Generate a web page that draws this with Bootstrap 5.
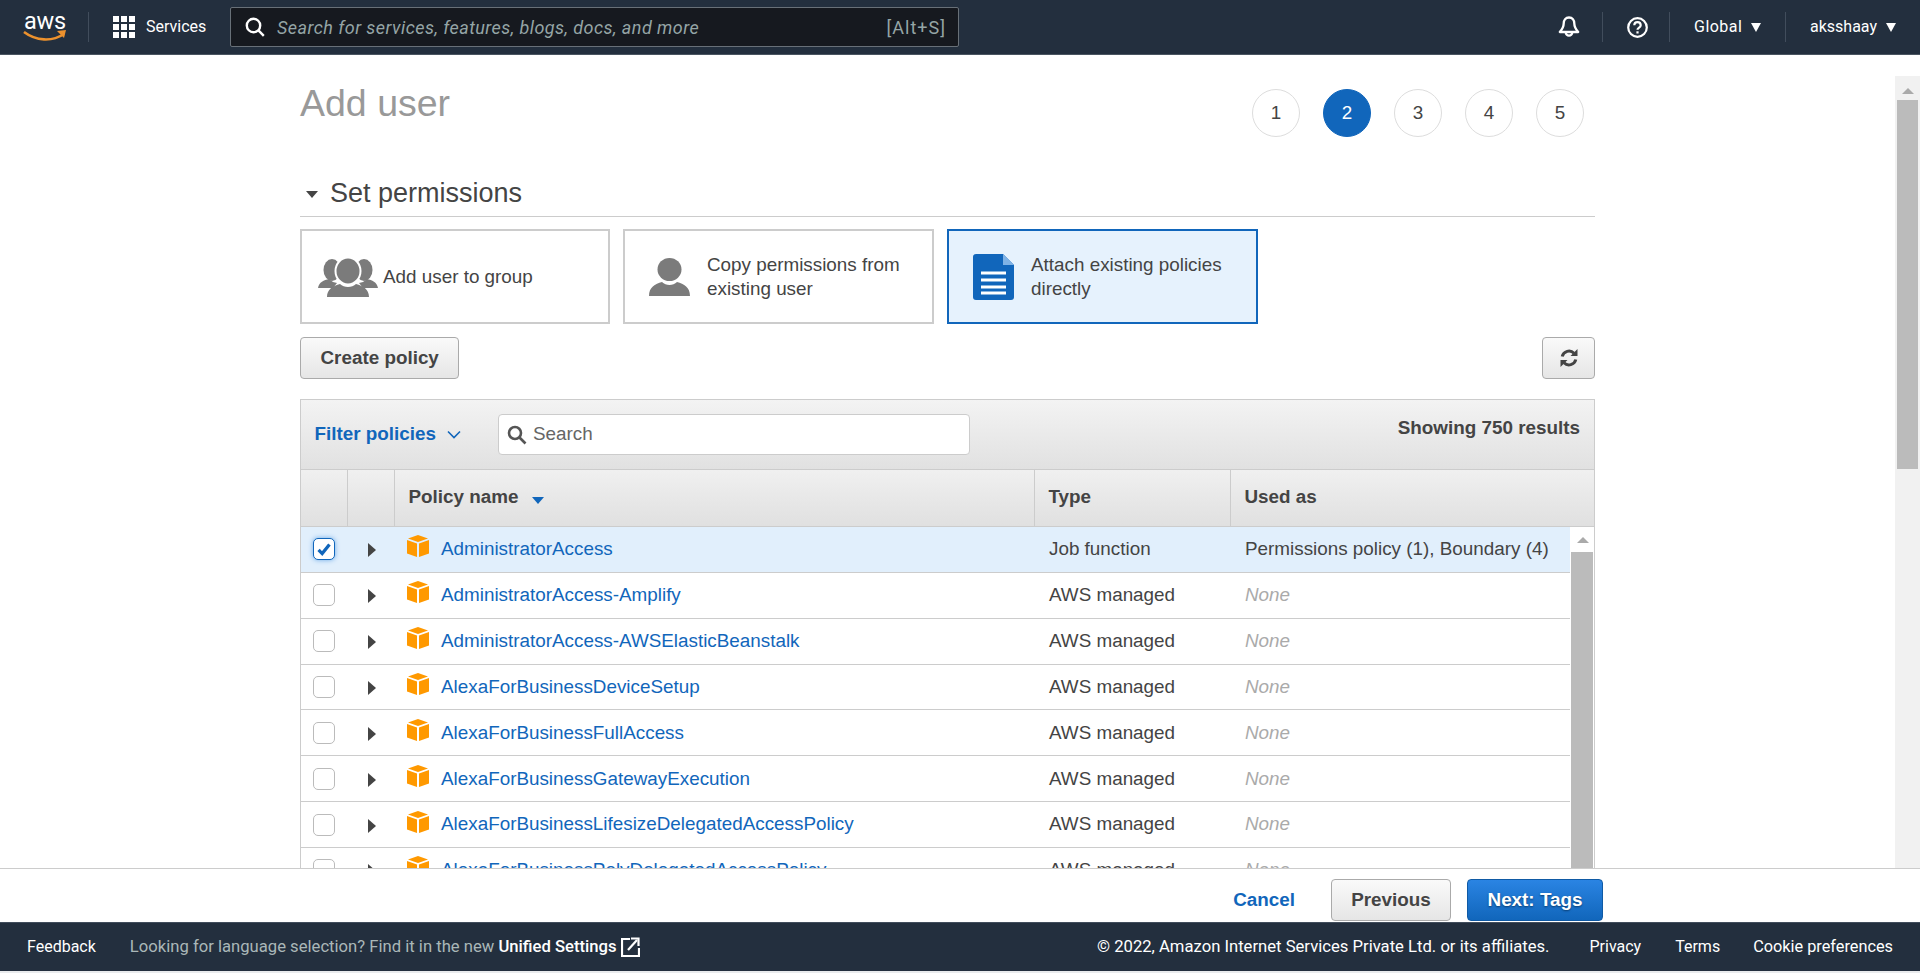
<!DOCTYPE html>
<html lang="en"><head><meta charset="utf-8"><title>Add user</title>
<link href="https://cdn.jsdelivr.net/npm/bootstrap@5.3.0/dist/css/bootstrap.min.css" rel="stylesheet">
<style>
html,body{height:973px;overflow:hidden}
body{font-family:"Liberation Sans",Arial,sans-serif;font-size:18.85px;color:#444;background:#e9ebed;display:flex;flex-direction:column}
a{text-decoration:none}
.top-bar{height:55px;flex:none;background:#232f3e;border-bottom:1px solid #4a5561;color:#fff;font-family:Roboto,sans-serif;font-size:16px;display:flex;align-items:center}
.brand-box{width:89px;height:30px;border-right:1px solid #414d5c;position:relative;flex:none}
.brand-word{position:absolute;left:24px;top:-7px;font:400 23.5px/32px Roboto,sans-serif;letter-spacing:-.2px;color:#fff}
.brand-smile{position:absolute;left:23px;top:18px}
.svc-link{margin-left:24px;gap:11px;width:117px;color:#fff}
.omni{width:729px;height:40px;flex:none;background:#16191f;border:1px solid #687078;border-radius:2px;color:#95a5a6;font-size:18px;padding:0 12px 0 14px;gap:12px}
.omni i{font-style:italic;letter-spacing:.025em}
.omni b{font-weight:400;margin-left:auto;letter-spacing:.055em}
.bell-wrap{margin-left:auto;margin-right:22px;display:flex;align-items:center}
.top-cell{height:30px;border-left:1px solid #414d5c;display:flex;align-items:center;flex:none}
.cell-help{width:67px;padding-left:24px}
.cell-global{width:116px;padding-left:24px;gap:9px;letter-spacing:.03em}
.cell-user{width:135px;padding-left:24px;gap:9px}
.tri-white{width:0;height:0;border-left:5.5px solid transparent;border-right:5.5px solid transparent;border-top:9px solid #fff;display:inline-block}
.page-area{flex:1 1 auto;min-height:0;background:#fff;display:flex;overflow:hidden}
.wiz{width:1295px;margin-left:300px;flex:none}
.page-title{font-size:37.5px;line-height:44px;color:#999;margin:22px 0 0;font-weight:400;padding-top:4px}
.step-list{gap:23px;padding:34px 11px 0 0;margin-left:auto}
.step-dot{width:48px;height:48px;border:1px solid #ddd;border-radius:50%;display:flex;align-items:center;justify-content:center;color:#444}
.step-dot.on{background:#1166bb;border-color:#1166bb;color:#fff}
.sec-head{height:44px;margin-top:36px;border-bottom:1px solid #ccc;font-size:27px;line-height:32px;color:#444;gap:12px;padding:0 0 4px 6px;display:flex;align-items:center}
.sec-caret{width:0;height:0;border-left:6.5px solid transparent;border-right:6.5px solid transparent;border-top:7px solid #444;margin-top:4px}
.choice-row{gap:13px;margin-top:12px}
.choice{width:311px;height:95px;border:2px solid #ccc;background:#fff;display:flex;align-items:center;line-height:24.5px;color:#444;padding-top:1px}
.choice.narrow{width:310px;padding-left:16px;gap:5px}
.choice.wide{padding-left:24px;gap:17px}
.choice.sel{border-color:#1166bb;background:#e6f2fd}
.gbtn{height:42px;background:linear-gradient(#fafafa,#e6e6e6);border:1px solid #aaa;border-radius:4px;color:#444;font-weight:700;font-size:18.85px;padding:0 19.5px;display:inline-flex;align-items:center;justify-content:center;line-height:1}
.gbtn:hover{background:#e6e6e6;border-color:#aaa;color:#444}
.btn-refresh{width:53px;padding:0}
.btn-prev{width:120px;padding:0}
.btn-next{width:136px;padding:0}
.tool-row{margin-top:13px}
.tbl-frame{margin-top:20px;border:1px solid #ccc;border-bottom:0}
.filter-strip{height:70px;background:linear-gradient(#f3f3f3,#e1e1e1);border-bottom:1px solid #ccc;position:relative;display:flex}
.filter-lnk{color:#1166bb;font-weight:700;margin-left:13.5px;margin-top:20px;line-height:28px;width:183.5px;display:flex;gap:11px;align-items:center;height:28px}
.filter-search{width:472px;height:41px;margin-top:14px;background:#fff;border:1px solid #ccc;border-radius:4px;display:flex;align-items:center;padding-left:8px;gap:6px;color:#666}
.filter-count{margin-left:auto;font-weight:700;padding:14px 14px 0 0}
.head-tbl,.body-tbl{table-layout:fixed;border-collapse:collapse;margin:0}
.head-tbl{width:1293px;background:linear-gradient(#f0f0f0,#e0e0e0);border-bottom:1px solid #ccc}
.head-tbl th{height:56px;padding:0 0 1px 14px;font-weight:700;color:#444;border-left:1px solid #ccc;vertical-align:middle}
.head-tbl th:first-child{border-left:0}
.sort-tri{display:inline-block;width:0;height:0;border-left:6.5px solid transparent;border-right:6.5px solid transparent;border-top:7px solid #1166bb;margin:0 0 0 8px;vertical-align:-1px}
.tbl-rows{display:flex}
.body-tbl{width:1269px;flex:none;align-self:flex-start}
.body-tbl td{height:45.86px;padding:0 0 0 14px;border-bottom:1px solid #ccc;white-space:nowrap;vertical-align:middle;color:#444;background:#fff}
.body-tbl td.col-txt{padding-left:15px}
.body-tbl td.none-txt{font-style:italic;color:#aaa;padding-left:15px}
.body-tbl tr.picked td{background:#e1effc}
.body-tbl .form-check-input{width:22px;height:22px;margin:0 0 0 -2px;border:1px solid #bbb;border-radius:5px;display:block;float:none}
.body-tbl .form-check-input:checked{background-color:#fff;border-color:#1166bb;box-shadow:0 0 5px #6aa9e8;background-image:url("data:image/svg+xml,%3csvg xmlns='http://www.w3.org/2000/svg' viewBox='0 0 22 22'%3e%3cpath d='M5 12l4 4 8-10' fill='none' stroke='%231166bb' stroke-width='3.6'/%3e%3c/svg%3e");background-size:100%}
.row-tri{width:0;height:0;border-top:7px solid transparent;border-bottom:7px solid transparent;border-left:8px solid #444;margin:2px 0 0 7px}
.name-cell{display:flex;align-items:center;gap:12px;margin-left:-1px}
.name-cell a{color:#1166bb}
.name-cell svg{margin-top:-6px;flex:none}
.mini-bar{width:24px;flex:none;padding-left:1px;background:#fff}
.bar-arrow{width:0;height:0;border-left:6px solid transparent;border-right:6px solid transparent;border-bottom:6px solid #aaa;margin:10px auto 9px}
.bar-thumb{height:400px;background:#bbb;width:22px}
.page-bar{width:25px;margin-left:auto;flex:none;margin-top:21px;background:#f1f1f1;padding:0 2px}
.page-bar .bar-thumb{width:21px;height:369px}
.page-bar .bar-arrow{margin:12px auto 6px}
.act-bar{height:54px;flex:none;background:#fff;border-top:1px solid #ccc;padding-top:10px;padding-right:317px;gap:16px;justify-content:flex-end;display:flex}
.act-cancel{color:#1166bb;font-weight:700;margin-right:20px;line-height:42px;height:42px}
.blue-btn{background:linear-gradient(#2a84e3,#1166bb);border:1px solid #0f5aa5;color:#fff;text-shadow:0 1px 2px #0a3d70}
.blue-btn:hover{background:#1166bb;color:#fff;border-color:#0f5aa5}
.foot-bar{height:49px;flex:none;background:#232f3e;border-top:1px solid #414d5c;color:#fff;font-family:Roboto,sans-serif;font-size:16px;display:flex;align-items:center;padding:0 27px}
.foot-bar a{color:#fff}
.foot-note{color:#aab7b8;margin-left:34px;font-size:16.65px}
.foot-note a{font-weight:500}
.foot-copy{font-size:16.65px;margin-left:auto}
.foot-privacy{margin-left:40px}
.foot-terms{margin-left:34px}
.foot-cookie{margin-left:33px;font-size:16.3px}
.foot-strip{height:2px;flex:none;background:#e9ebed}
</style></head>
<body>
<nav class="top-bar">
  <div class="brand-box"><span class="brand-word">aws</span>
    <svg class="brand-smile" width="44" height="14" viewBox="0 0 44 14"><path d="M1 2c12 9 28 10 40 2" fill="none" stroke="#ec912d" stroke-width="2.6"/><path d="M34 1l9-1-2 8z" fill="#ec912d"/></svg></div>
  <a href="#" class="svc-link d-flex align-items-center">
    <svg width="22" height="22" viewBox="0 0 22 22" fill="#fff"><rect width="6" height="6"/><rect x="8" width="6" height="6"/><rect x="16" width="6" height="6"/><rect y="8" width="6" height="6"/><rect x="8" y="8" width="6" height="6"/><rect x="16" y="8" width="6" height="6"/><rect y="16" width="6" height="6"/><rect x="8" y="16" width="6" height="6"/><rect x="16" y="16" width="6" height="6"/></svg>
    <span>Services</span></a>
  <div class="omni d-flex align-items-center">
    <svg width="20" height="20" viewBox="0 0 20 20" fill="none" stroke="#fff" stroke-width="2.4"><circle cx="8.5" cy="8.5" r="6.7"/><path d="M13.2 13.2l5.6 5.6"/></svg>
    <i>Search for services, features, blogs, docs, and more</i><b>[Alt+S]</b>
  </div>
  <div class="bell-wrap">
    <svg width="22" height="22" viewBox="0 0 22 22" fill="none" stroke="#fff" stroke-width="2.3"><path d="M11 1.500c-3.400 0-5.300 2.700-5.300 6 0 3.600-1.300 5.500-3.900 8.500h18.400c-2.600-3-3.900-4.900-3.900-8.500 0-3.300-1.900-6-5.300-6z" stroke-linejoin="round"/><path d="M7.800 16.500a3.200 3.200 0 0 0 6.400 0"/></svg>
  </div>
  <div class="top-cell cell-help">
    <svg width="21" height="21" viewBox="0 0 21 21" fill="none" stroke="#fff" stroke-width="2.2"><circle cx="10.500" cy="10.500" r="9.300"/><path d="M7.300 8.300c0-4.200 6.400-4.200 6.400 0 0 2.300-3.200 2.300-3.200 4.500"/><path d="M10.500 14.300v2.200"/></svg>
  </div>
  <div class="top-cell cell-global">Global <span class="tri-white"></span></div>
  <div class="top-cell cell-user">aksshaay <span class="tri-white"></span></div>
</nav>

<div class="page-area">
  <main class="wiz">
    <div class="d-flex align-items-start">
      <h1 class="page-title">Add user</h1>
      <div class="step-list d-flex">
        <span class="step-dot">1</span><span class="step-dot on">2</span><span class="step-dot">3</span><span class="step-dot">4</span><span class="step-dot">5</span>
      </div>
    </div>
    <div class="sec-head"><span class="sec-caret"></span><span>Set permissions</span></div>
    <div class="choice-row d-flex">
      <div class="choice narrow">
        <svg width="60" height="40" viewBox="0 0 60 40" fill="#7b7b7b"><ellipse cx="14" cy="13" rx="8.500" ry="11"/><ellipse cx="46" cy="13" rx="8.500" ry="11"/><path d="M0 31c1-6 6-8 11-9l4 3 4 1-4 5z"/><path d="M60 31c-1-6-6-8-11-9l-4 3-4 1 4 5z"/><ellipse cx="30" cy="14" rx="12.500" ry="13.500" stroke="#fff" stroke-width="2"/><path d="M9 40c0-8 6-11 13-13 4 4 12 4 16 0 7 2 13 5 13 13z"/></svg>
        <span>Add user to group</span></div>
      <div class="choice wide">
        <svg width="41" height="38" viewBox="0 0 41 38" fill="#7b7b7b"><ellipse cx="20.500" cy="11.500" rx="12" ry="11.500"/><path d="M0 38c0-9 6-12 13-14 4 4 11 4 15 0 7 2 13 5 13 14z"/></svg>
        <span>Copy permissions from<br>existing user</span></div>
      <div class="choice wide sel">
        <svg width="41" height="46" viewBox="0 0 41 46"><path d="M3 0h27l11 11v32a3 3 0 0 1-3 3H3a3 3 0 0 1-3-3V3a3 3 0 0 1 3-3z" fill="#1166bb"/><path d="M30 0l11 11H30z" fill="#7fb2e5"/><path d="M8 19h25M8 26h25M8 33h25M8 39h25" stroke="#fff" stroke-width="3"/></svg>
        <span>Attach existing policies<br>directly</span></div>
    </div>
    <div class="tool-row d-flex justify-content-between">
      <button class="btn gbtn" type="button">Create policy</button>
      <button class="btn gbtn btn-refresh" type="button" aria-label="Refresh">
        <svg width="18" height="18" viewBox="0 0 18 18" fill="none" stroke="#444" stroke-width="3"><path d="M2.200 7.500A7 7 0 0 1 14 4.200"/><path d="M15.800 10.500A7 7 0 0 1 4 13.800"/><path d="M17.500 0v7h-7z" fill="#444" stroke="none"/><path d="M.5 18v-7h7z" fill="#444" stroke="none"/></svg>
      </button>
    </div>
    <section class="tbl-frame">
      <div class="filter-strip">
        <a href="#" class="filter-lnk">Filter policies
          <svg width="14" height="9" viewBox="0 0 14 9" fill="none" stroke="#1166bb" stroke-width="1.600"><path d="M1 1.500l6 6 6-6"/></svg></a>
        <div class="filter-search">
          <svg width="20" height="20" viewBox="0 0 20 20" fill="none" stroke="#555" stroke-width="2.600"><circle cx="8" cy="8" r="6"/><path d="M12.500 12.500l6 6"/></svg>
          <span>Search</span></div>
        <div class="filter-count">Showing 750 results</div>
      </div>
      <table class="head-tbl">
        <colgroup><col style="width:46px"><col style="width:47px"><col style="width:640px"><col style="width:196px"><col></colgroup>
        <thead><tr><th></th><th></th><th>Policy name <span class="sort-tri"></span></th><th>Type</th><th>Used as</th></tr></thead>
      </table>
      <div class="tbl-rows">
        <table class="body-tbl">
          <colgroup><col style="width:46px"><col style="width:47px"><col style="width:640px"><col style="width:196px"><col></colgroup>
          <tbody>
            <tr class="picked"><td><input class="form-check-input" type="checkbox" checked aria-label="Select"></td><td><div class="row-tri"></div></td><td><div class="name-cell"><svg width="22" height="22" viewBox="0 0 22 22"><path d="M11 0l10 3.500L11 7 1 3.500z" fill="#f90"/><path d="M0 5l10 3.500V22L0 18.500z" fill="#f90"/><path d="M22 5L12 8.500V22l10-3.500z" fill="#f90"/></svg><a href="#">AdministratorAccess</a></div></td><td class="col-txt">Job function</td><td class="col-txt">Permissions policy (1), Boundary (4)</td></tr>
            <tr><td><input class="form-check-input" type="checkbox" aria-label="Select"></td><td><div class="row-tri"></div></td><td><div class="name-cell"><svg width="22" height="22" viewBox="0 0 22 22"><path d="M11 0l10 3.500L11 7 1 3.500z" fill="#f90"/><path d="M0 5l10 3.500V22L0 18.500z" fill="#f90"/><path d="M22 5L12 8.500V22l10-3.500z" fill="#f90"/></svg><a href="#">AdministratorAccess-Amplify</a></div></td><td class="col-txt">AWS managed</td><td class="none-txt">None</td></tr>
            <tr><td><input class="form-check-input" type="checkbox" aria-label="Select"></td><td><div class="row-tri"></div></td><td><div class="name-cell"><svg width="22" height="22" viewBox="0 0 22 22"><path d="M11 0l10 3.500L11 7 1 3.500z" fill="#f90"/><path d="M0 5l10 3.500V22L0 18.500z" fill="#f90"/><path d="M22 5L12 8.500V22l10-3.500z" fill="#f90"/></svg><a href="#">AdministratorAccess-AWSElasticBeanstalk</a></div></td><td class="col-txt">AWS managed</td><td class="none-txt">None</td></tr>
            <tr><td><input class="form-check-input" type="checkbox" aria-label="Select"></td><td><div class="row-tri"></div></td><td><div class="name-cell"><svg width="22" height="22" viewBox="0 0 22 22"><path d="M11 0l10 3.500L11 7 1 3.500z" fill="#f90"/><path d="M0 5l10 3.500V22L0 18.500z" fill="#f90"/><path d="M22 5L12 8.500V22l10-3.500z" fill="#f90"/></svg><a href="#">AlexaForBusinessDeviceSetup</a></div></td><td class="col-txt">AWS managed</td><td class="none-txt">None</td></tr>
            <tr><td><input class="form-check-input" type="checkbox" aria-label="Select"></td><td><div class="row-tri"></div></td><td><div class="name-cell"><svg width="22" height="22" viewBox="0 0 22 22"><path d="M11 0l10 3.500L11 7 1 3.500z" fill="#f90"/><path d="M0 5l10 3.500V22L0 18.500z" fill="#f90"/><path d="M22 5L12 8.500V22l10-3.500z" fill="#f90"/></svg><a href="#">AlexaForBusinessFullAccess</a></div></td><td class="col-txt">AWS managed</td><td class="none-txt">None</td></tr>
            <tr><td><input class="form-check-input" type="checkbox" aria-label="Select"></td><td><div class="row-tri"></div></td><td><div class="name-cell"><svg width="22" height="22" viewBox="0 0 22 22"><path d="M11 0l10 3.500L11 7 1 3.500z" fill="#f90"/><path d="M0 5l10 3.500V22L0 18.500z" fill="#f90"/><path d="M22 5L12 8.500V22l10-3.500z" fill="#f90"/></svg><a href="#">AlexaForBusinessGatewayExecution</a></div></td><td class="col-txt">AWS managed</td><td class="none-txt">None</td></tr>
            <tr><td><input class="form-check-input" type="checkbox" aria-label="Select"></td><td><div class="row-tri"></div></td><td><div class="name-cell"><svg width="22" height="22" viewBox="0 0 22 22"><path d="M11 0l10 3.500L11 7 1 3.500z" fill="#f90"/><path d="M0 5l10 3.500V22L0 18.500z" fill="#f90"/><path d="M22 5L12 8.500V22l10-3.500z" fill="#f90"/></svg><a href="#">AlexaForBusinessLifesizeDelegatedAccessPolicy</a></div></td><td class="col-txt">AWS managed</td><td class="none-txt">None</td></tr>
            <tr><td><input class="form-check-input" type="checkbox" aria-label="Select"></td><td><div class="row-tri"></div></td><td><div class="name-cell"><svg width="22" height="22" viewBox="0 0 22 22"><path d="M11 0l10 3.500L11 7 1 3.500z" fill="#f90"/><path d="M0 5l10 3.500V22L0 18.500z" fill="#f90"/><path d="M22 5L12 8.500V22l10-3.500z" fill="#f90"/></svg><a href="#">AlexaForBusinessPolyDelegatedAccessPolicy</a></div></td><td class="col-txt">AWS managed</td><td class="none-txt">None</td></tr>
          </tbody>
        </table>
        <div class="mini-bar"><div class="bar-arrow"></div><div class="bar-thumb"></div></div>
      </div>
    </section>
  </main>
  <div class="page-bar"><div class="bar-arrow"></div><div class="bar-thumb"></div></div>
</div>

<div class="act-bar">
  <a href="#" class="act-cancel">Cancel</a>
  <button class="btn gbtn btn-prev" type="button">Previous</button>
  <button class="btn gbtn btn-next blue-btn" type="button">Next: Tags</button>
</div>
<footer class="foot-bar">
  <a href="#">Feedback</a>
  <span class="foot-note">Looking for language selection? Find it in the new <a href="#">Unified Settings</a></span>
  <svg class="ms-1" width="19" height="20" viewBox="0 0 19 20" fill="none" stroke="#fff" stroke-width="2.2"><path d="M9 2H1v17h17v-8"/><path d="M7 13L16 3"/><path d="M10 1.500h7.500V9"/></svg>
  <span class="foot-copy">© 2022, Amazon Internet Services Private Ltd. or its affiliates.</span>
  <a href="#" class="foot-privacy">Privacy</a>
  <a href="#" class="foot-terms">Terms</a>
  <a href="#" class="foot-cookie">Cookie preferences</a>
</footer>
<div class="foot-strip"></div>
<script src="https://cdn.jsdelivr.net/npm/bootstrap@5.3.0/dist/js/bootstrap.bundle.min.js"></script>
</body></html>
